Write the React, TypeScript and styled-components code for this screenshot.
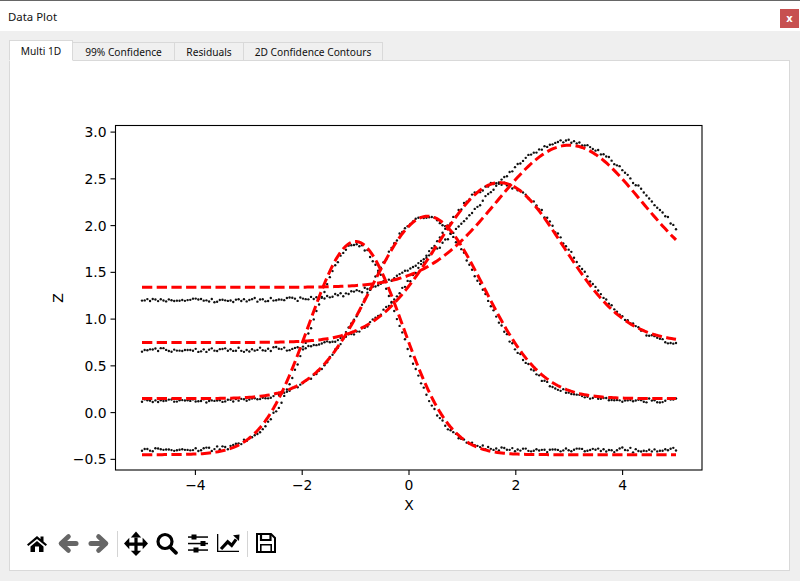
import React from "react";
import styled, { createGlobalStyle } from "styled-components";

const GlobalStyle = createGlobalStyle`
  html, body {
    margin: 0;
    padding: 0;
    background: #f0f0f0;
  }
`;

const Window = styled.div`
  width: 800px;
  height: 581px;
  display: flex;
  flex-direction: column;
  overflow: hidden;
  border-top: 1px solid #666666;
  box-sizing: border-box;
  background: #efefef;
  font-family: "Noto Sans", "Open Sans", sans-serif;
  color: #111111;
`;

const TitleBar = styled.div`
  height: 30px;
  flex: none;
  display: flex;
  align-items: center;
  justify-content: space-between;
  padding: 0 1px 0 8px;
  background: #ffffff;
`;

const Title = styled.span`
  font-size: 11.4px;
`;

const CloseButton = styled.div`
  width: 19px;
  height: 19px;
  margin-top: 5px;
  display: flex;
  align-items: center;
  justify-content: center;
  background: #c75050;
  color: #ffffff;
  font-family: "DejaVu Sans", sans-serif;
  font-size: 10px;
  font-weight: 700;
`;

const Body = styled.div`
  flex: 1;
  display: flex;
  flex-direction: column;
  min-height: 0;
  padding: 9px 10px 10px 9px;
`;

const TabBar = styled.div`
  display: flex;
  align-items: flex-end;
  height: 21px;
  flex: none;
  position: relative;
  z-index: 1;
  margin-bottom: -1px;
`;

const Tab = styled.div<{ $active?: boolean; $width: number }>`
  box-sizing: border-box;
  width: ${(p) => p.$width}px;
  height: ${(p) => (p.$active ? 21 : 19)}px;
  display: flex;
  align-items: center;
  justify-content: center;
  border: 1px solid #d9d9d9;
  border-left-width: ${(p) => (p.$active ? 1 : 0)}px;
  border-bottom-color: ${(p) => (p.$active ? "#ffffff" : "#d9d9d9")};
  background: ${(p) => (p.$active ? "#ffffff" : "#f0f0f0")};
  font-size: 10.2px;
  white-space: nowrap;
`;

const Pane = styled.div`
  flex: 1;
  min-height: 0;
  display: flex;
  flex-direction: column;
  box-sizing: border-box;
  background: #ffffff;
  border: 1px solid #d9d9d9;
`;

const Figure = styled.svg`
  display: block;
  flex: none;
  width: 779px;
  height: 460px;
`;

const TickLabel = styled.text`
  font-family: "DejaVu Sans", sans-serif;
  font-size: 13.9px;
  fill: #000000;
`;

const Toolbar = styled.div`
  flex: 1;
  display: flex;
  align-items: center;
  padding: 0 0 3px 12px;
`;

const ToolButton = styled.div<{ $muted?: boolean }>`
  width: 30.7px;
  height: 30px;
  display: flex;
  align-items: center;
  justify-content: center;
  color: ${(p) => (p.$muted ? "#666666" : "#000000")};
`;

const ToolIcon = styled.svg`
  display: block;
  width: 24px;
  height: 24px;
  overflow: visible;
`;

const ToolDivider = styled.div`
  width: 1px;
  height: 26px;
  margin: 0 3px;
  background: #d4d4d4;
`;

const AX = { left: 115.5, right: 702, top: 125.5, bottom: 470 };
const px = (x: number) => 409 + 53.4 * x;
const py = (z: number) => 412.6 - 93.5 * z;

type Bump = { base: number; amp: number; mu: number; s: number };

const measured: Bump[] = [
  { base: -0.4, amp: 2.2, mu: -1, s: 0.82 },
  { base: 0.13, amp: 1.97, mu: 0.32, s: 1.05 },
  { base: 0.67, amp: 1.78, mu: 1.7, s: 1.28 },
  { base: 1.2, amp: 1.7, mu: 2.96, s: 1.63 },
];

const fitted: Bump[] = [
  { base: -0.45, amp: 2.28, mu: -1, s: 0.88 },
  { base: 0.15, amp: 1.95, mu: 0.35, s: 1.06 },
  { base: 0.75, amp: 1.71, mu: 1.7, s: 1.18 },
  { base: 1.34, amp: 1.52, mu: 3, s: 1.35 },
];

const bump = (b: Bump, x: number) =>
  b.base + b.amp * Math.exp(-((x - b.mu) ** 2) / (2 * b.s * b.s));

function makeRandom(seed: number) {
  let state = seed;
  return () => {
    state = (state * 16807) % 2147483647;
    return state / 2147483647 - 0.5;
  };
}

const range = (count: number) => Array.from({ length: count }, (_, i) => -5 + (10 * i) / (count - 1));

const fitPath = (b: Bump) =>
  range(240)
    .map((x, i) => `${i ? "L" : "M"}${px(x).toFixed(2)} ${py(bump(b, x)).toFixed(2)}`)
    .join(" ");

const random = makeRandom(4711);
const dots = measured.flatMap((b) =>
  range(200).map((x) => ({
    x: px(x),
    y: py(bump(b, x) + (random() + random()) * 0.028),
  }))
);

const xTicks = [-4, -2, 0, 2, 4];
const yTicks = [3, 2.5, 2, 1.5, 1, 0.5, 0, -0.5];
const label = (n: number) => n.toString().replace("-", "\u2212");

function Plot() {
  return (
    <Figure viewBox="10 61 779 460">
      {dots.map((d, i) => (
        <circle key={i} cx={d.x} cy={d.y} r={1.2} fill="#111111" />
      ))}
      {fitted.map((b) => (
        <path
          key={b.mu}
          d={fitPath(b)}
          fill="none"
          stroke="#ff0000"
          strokeWidth={3}
          strokeDasharray="10.3 4.4"
        />
      ))}
      <rect
        x={AX.left}
        y={AX.top}
        width={AX.right - AX.left}
        height={AX.bottom - AX.top}
        fill="none"
        stroke="#000000"
        strokeWidth={1.1}
      />
      {xTicks.map((t) => (
        <g key={t}>
          <line x1={px(t)} x2={px(t)} y1={AX.bottom} y2={AX.bottom + 5} stroke="#000000" strokeWidth={1.1} />
          <TickLabel x={px(t)} y={AX.bottom + 20} textAnchor="middle">
            {label(t)}
          </TickLabel>
        </g>
      ))}
      {yTicks.map((t) => (
        <g key={t}>
          <line x1={AX.left - 5} x2={AX.left} y1={py(t)} y2={py(t)} stroke="#000000" strokeWidth={1.1} />
          <TickLabel x={AX.left - 9} y={py(t) + 5} textAnchor="end">
            {label(t).includes(".") ? label(t) : label(t) + ".0"}
          </TickLabel>
        </g>
      ))}
      <TickLabel x={409} y={510} textAnchor="middle">
        X
      </TickLabel>
      <TickLabel x={0} y={0} textAnchor="middle" transform="translate(63 298) rotate(-90)">
        Z
      </TickLabel>
    </Figure>
  );
}

const HomeIcon = () => (
  <ToolIcon viewBox="0 0 24 24" fill="currentColor">
    <path d="M2 12.5 12 4l3.5 3V4.5h3v5l3.5 3-1.3 1.6L12 7 3.3 14.1z" />
    <path d="M5.5 14.5 12 9l6.5 5.5V20H14v-5.5h-4V20H5.500z" />
  </ToolIcon>
);

const BackIcon = () => (
  <ToolIcon viewBox="0 0 24 24" fill="none" stroke="currentColor">
    <path d="M12.500 4.500 5 11.500l7.500 7" strokeWidth={4.6} strokeLinecap="round" strokeLinejoin="round" />
    <path d="M6 11.500h14" strokeWidth={5} strokeLinecap="round" />
  </ToolIcon>
);

const ForwardIcon = () => (
  <ToolIcon viewBox="0 0 24 24" fill="none" stroke="currentColor">
    <path d="M11.500 4.500 19 11.500l-7.500 7" strokeWidth={4.6} strokeLinecap="round" strokeLinejoin="round" />
    <path d="M18 11.500H4" strokeWidth={5} strokeLinecap="round" />
  </ToolIcon>
);

const MoveIcon = () => (
  <ToolIcon viewBox="0 0 24 24" fill="currentColor">
    <path d="M10.400 5.500h3.200v5h5V5.800l.1 0L24 11.500l-5.300 5.700v-3.500h-5.100v5h3.600L12 24l-5.200-5.300h3.600v-5H5.300v3.500L0 11.500l5.300-5.700v4.700h5.100z" />
    <path d="M12 -.5 17.200 5.500H6.800z" />
  </ToolIcon>
);

const ZoomIcon = () => (
  <ToolIcon viewBox="0 0 24 24" fill="none" stroke="currentColor">
    <circle cx={10} cy={9.500} r={7} strokeWidth={3.2} />
    <path d="M15 15 21 20.800" strokeWidth={3.8} strokeLinecap="round" />
  </ToolIcon>
);

const SlidersIcon = () => (
  <ToolIcon viewBox="0 0 24 24" fill="currentColor">
    <rect x={2} y={4.300} width={20} height={1.500} />
    <rect x={2} y={10.800} width={20} height={1.500} />
    <rect x={2} y={17.300} width={20} height={1.500} />
    <rect x={5.500} y={2.500} width={5} height={5} />
    <rect x={14.500} y={9} width={5} height={5} />
    <rect x={7.500} y={15.500} width={5} height={5} />
  </ToolIcon>
);

const ChartIcon = () => (
  <ToolIcon viewBox="0 0 24 24" fill="currentColor">
    <path d="M1 2h1.300v16.700H23V20H1z" />
    <path d="M5 17 11.700 9.800l4 3.600 4.400-6" fill="none" stroke="currentColor" strokeWidth={3.200} />
    <path d="M17 3.300 23.500 2.500 23 9z" />
  </ToolIcon>
);

const SaveIcon = () => (
  <ToolIcon viewBox="0 0 24 24" fill="none" stroke="currentColor">
    <path d="M3 2h14l4 4v14H3z" strokeWidth={2} />
    <path d="M7 2v6h9.500V2" strokeWidth={2.200} />
    <path d="M6.800 20v-7.200h10.400V20" strokeWidth={1.600} />
  </ToolIcon>
);

export default function App() {
  return (
    <>
      <GlobalStyle />
      <Window>
        <TitleBar>
          <Title>Data Plot</Title>
          <CloseButton>x</CloseButton>
        </TitleBar>
        <Body>
          <TabBar>
            <Tab $active $width={64}>Multi 1D</Tab>
            <Tab $width={102}>99% Confidence</Tab>
            <Tab $width={69}>Residuals</Tab>
            <Tab $width={139}>2D Confidence Contours</Tab>
          </TabBar>
          <Pane>
            <Plot />
            <Toolbar>
              <ToolButton><HomeIcon /></ToolButton>
              <ToolButton $muted><BackIcon /></ToolButton>
              <ToolButton $muted><ForwardIcon /></ToolButton>
              <ToolDivider />
              <ToolButton><MoveIcon /></ToolButton>
              <ToolButton><ZoomIcon /></ToolButton>
              <ToolButton><SlidersIcon /></ToolButton>
              <ToolButton><ChartIcon /></ToolButton>
              <ToolDivider />
              <ToolButton><SaveIcon /></ToolButton>
            </Toolbar>
          </Pane>
        </Body>
      </Window>
    </>
  );
}
